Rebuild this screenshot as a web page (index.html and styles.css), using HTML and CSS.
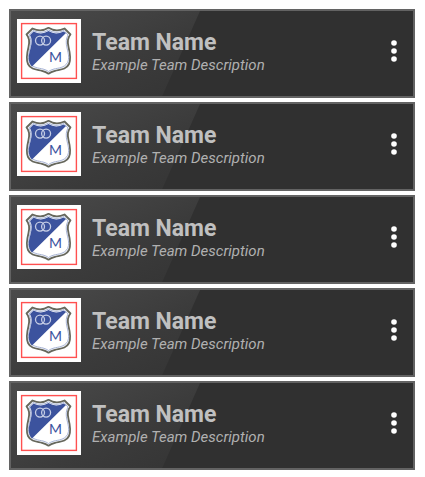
FILE: index.html
```
<!DOCTYPE html>
<html lang="en">
<head>
<meta charset="utf-8">
<title>Teams</title>
<link rel="stylesheet" href="styles.css">
</head>
<body>
<svg class="defs" aria-hidden="true">
  <symbol id="crest" viewBox="0 0 64 64">
    <rect width="64" height="64" fill="#fff"/>
    <rect x="4.600" y="4.600" width="54.800" height="54.800" fill="none" stroke="#ff5050" stroke-width="1.400"/>
    <path d="M15.500 9.500Q24 13.500 31.500 8.800Q39 13.500 47.500 9.500L53.500 15.500Q49.500 20 51.500 28C53 34 54.500 40 52 45C49 51 43 50.500 38 51.800Q34 52.800 31.500 54.700Q29 52.800 25 51.800C20 50.500 14 51 11 45C8.500 40 10 34 11.500 28Q13.500 20 9.500 15.500Z" fill="#f4f6fb" stroke="#66675c" stroke-width="1.800" stroke-linejoin="round"/>
    <path d="M16 11.500Q24.500 15.500 31.500 11Q38.500 15.500 47 11.500L51 16Q48 21 50 29C51.500 35 52.500 39.500 50.500 43.500C47.500 49 41 49 37 50Q33.500 51 31.500 52.500Q29.500 51 26 50C22 49 15.500 49 12.500 43.500C10.500 39.500 11.500 35 13 29Q15 21 12 16Z" fill="#fff" stroke="#aab6d6" stroke-width="1"/>
    <path d="M16.500 12.500Q24.500 16.500 31.500 12Q38.500 16.500 46.500 12.500L49 14L15 47.500C10.500 43 11.500 36 13.500 29.500Q16 21 13 16Z" fill="#3c539e"/>
    <g fill="none" stroke="#c5cde5" stroke-width="1.300">
      <circle cx="23" cy="21.600" r="4.500"/>
      <circle cx="29.100" cy="21.600" r="4.500"/>
    </g>
    <text class="crest-letter" x="38.500" y="43" text-anchor="middle">M</text>
  </symbol>
  <symbol id="more" viewBox="0 0 6 22">
    <circle cx="3" cy="3" r="2.800"/>
    <circle cx="3" cy="11" r="2.800"/>
    <circle cx="3" cy="19" r="2.800"/>
  </symbol>
</svg>
<main class="teams">
  <article class="team">
    <svg class="logo" role="img" aria-label="Team crest"><use href="#crest"/></svg>
    <div class="info"><h2>Team Name</h2><p>Example Team Description</p></div>
    <button class="menu" type="button" aria-label="More options"><svg><use href="#more"/></svg></button>
  </article>
  <article class="team">
    <svg class="logo" role="img" aria-label="Team crest"><use href="#crest"/></svg>
    <div class="info"><h2>Team Name</h2><p>Example Team Description</p></div>
    <button class="menu" type="button" aria-label="More options"><svg><use href="#more"/></svg></button>
  </article>
  <article class="team">
    <svg class="logo" role="img" aria-label="Team crest"><use href="#crest"/></svg>
    <div class="info"><h2>Team Name</h2><p>Example Team Description</p></div>
    <button class="menu" type="button" aria-label="More options"><svg><use href="#more"/></svg></button>
  </article>
  <article class="team">
    <svg class="logo" role="img" aria-label="Team crest"><use href="#crest"/></svg>
    <div class="info"><h2>Team Name</h2><p>Example Team Description</p></div>
    <button class="menu" type="button" aria-label="More options"><svg><use href="#more"/></svg></button>
  </article>
  <article class="team">
    <svg class="logo" role="img" aria-label="Team crest"><use href="#crest"/></svg>
    <div class="info"><h2>Team Name</h2><p>Example Team Description</p></div>
    <button class="menu" type="button" aria-label="More options"><svg><use href="#more"/></svg></button>
  </article>
</main>
</body>
</html>
```
FILE: styles.css
```
* {
  box-sizing: border-box;
}

body {
  margin: 0;
  background: #fff;
  font-family: Roboto, "Liberation Sans", sans-serif;
}

.defs {
  display: none;
}

.teams {
  display: flex;
  flex-direction: column;
  gap: 4px;
  padding: 9px 10px 7px 9px;
}

.team {
  position: relative;
  display: flex;
  align-items: flex-start;
  gap: 11px;
  padding: 8px 10px 13px 6px;
  border: 2px solid #636363;
  background: #303030;
}

/* Glossy highlight with a slanted right edge */
.team::before {
  content: "";
  position: absolute;
  inset: 0 auto 0 0;
  width: 189px;
  background: linear-gradient(155deg, #4b4b4b, #3b3b3b 60%, #343434);
  clip-path: polygon(0 0, 100% 0, 80% 100%, 0 100%);
}

.team > * {
  position: relative;
}

.logo {
  flex: none;
  width: 64px;
  height: 64px;
}

.crest-letter {
  font: 14px Lato, sans-serif;
  fill: #3c539e;
}

.info {
  flex: 1;
  padding-top: 10px;
  color: #c0c0c0;
}

h2 {
  margin: 0;
  font-size: 23px;
  line-height: 28px;
  font-weight: 700;
}

p {
  margin: 0;
  color: #b0b0b0;
  font-size: 15px;
  line-height: 16px;
  font-style: italic;
}

.menu {
  display: flex;
  align-items: center;
  justify-content: center;
  width: 18px;
  height: 64px;
  margin: 0;
  padding: 0;
  border: 0;
  background: none;
}

.menu svg {
  width: 6px;
  height: 22px;
  fill: #fff;
}
```
